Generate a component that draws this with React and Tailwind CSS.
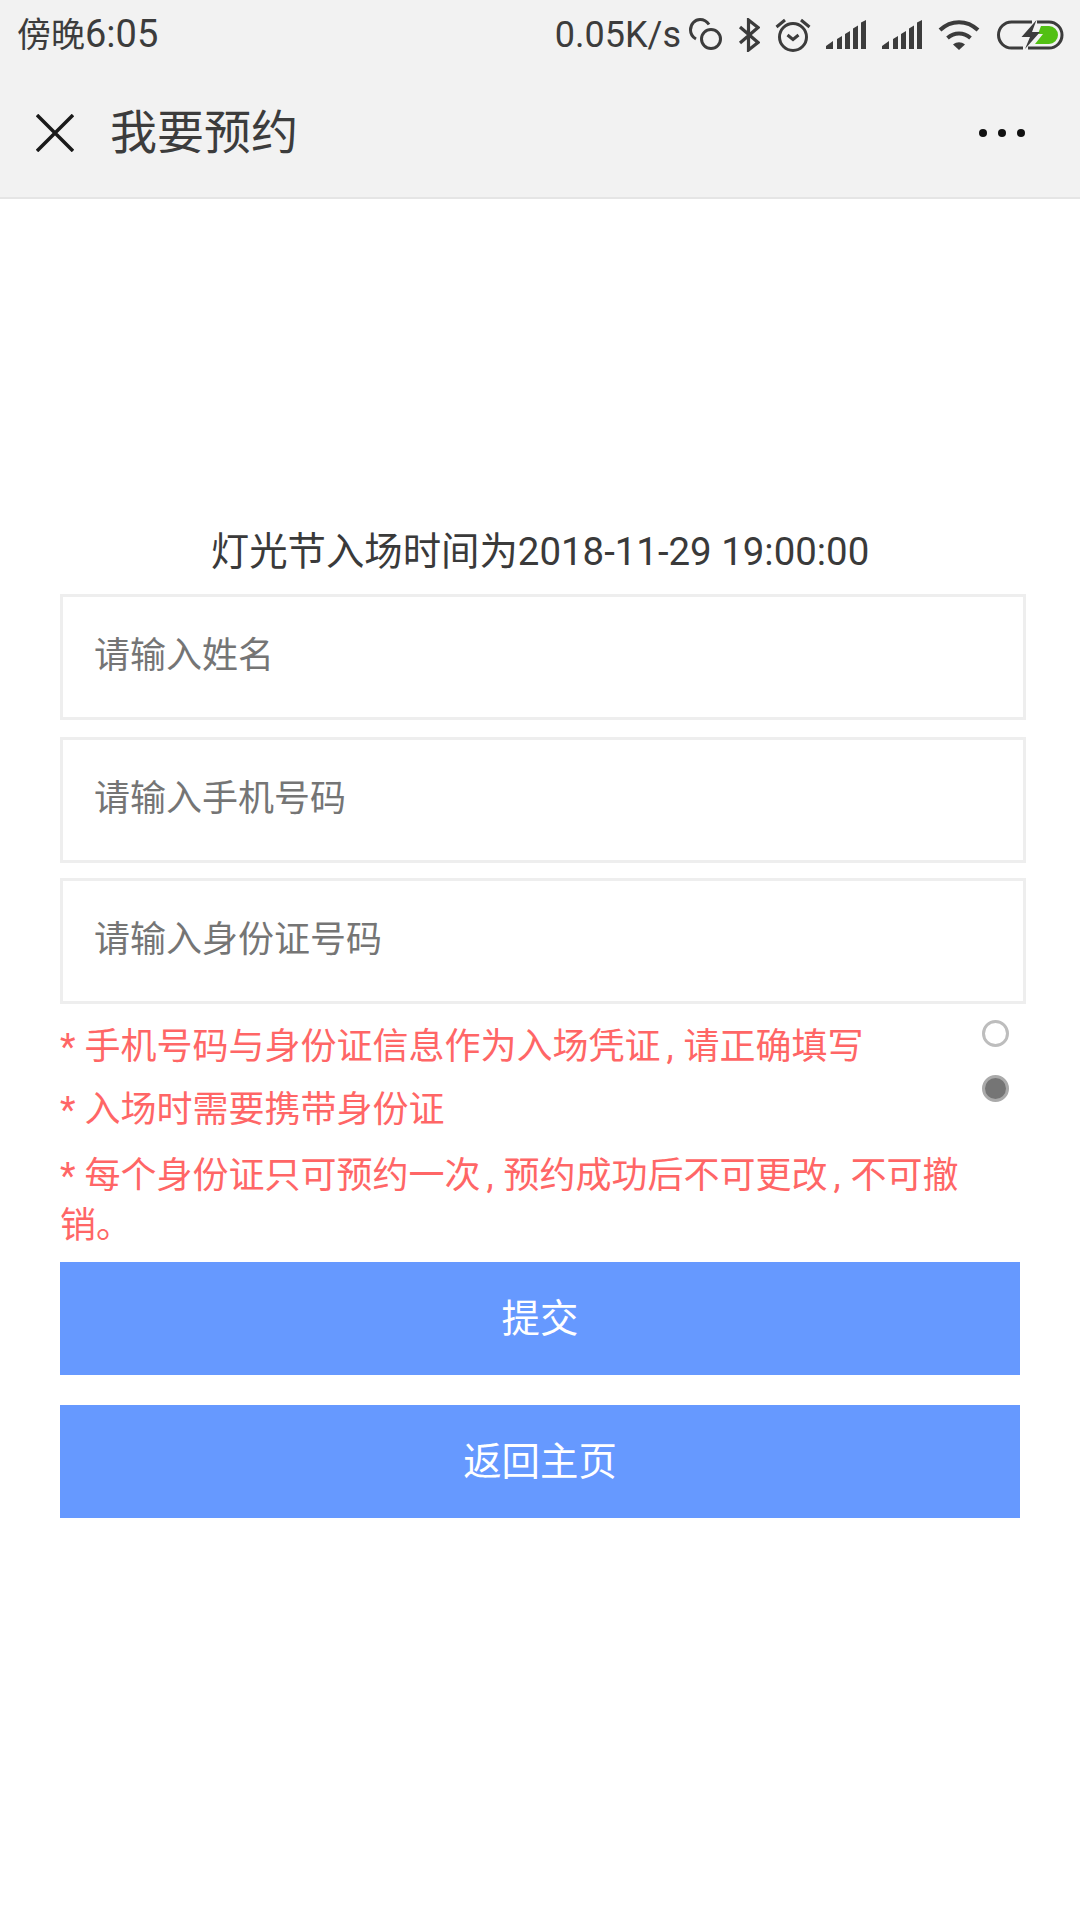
const CJK = "font-['Roboto','Noto_Sans_CJK_SC',sans-serif]";

function Comma() {
  return <span className="inline-block w-[23px] pl-[6px]">,</span>;
}

function Signal() {
  return (
    <svg width="40" height="29" viewBox="0 0 40 29" fill="#3c3c3c">
      <path d="M0 29v-3l7-5v8zM11 29V19l5-3v13zM19 29V14l5-3v18zM27 29V8.500l5-3V29zM35 29V2.500L40 0v29z" />
    </svg>
  );
}

function StatusIcons() {
  const c = "#3c3c3c";
  return (
    <div className="flex items-center">
      <svg width="33" height="33" viewBox="0 0 33 33" fill="none" stroke={c} strokeWidth="3" className="ml-[8px]">
        <circle cx="22" cy="21" r="9.500" />
        <path d="M7 21C3.500 19 1.500 15.500 1.500 12 1.500 6 6 1.500 11 1.500c4 0 7 2 9 5" />
      </svg>
      <svg width="22" height="34" viewBox="0 0 22 34" fill="none" stroke={c} strokeWidth="3.200" className="ml-[16px]">
        <path d="M2 9l18 15.500L10.500 32V2L20 9.500 2 25" />
      </svg>
      <svg width="36" height="34" viewBox="0 0 36 34" fill="none" stroke={c} strokeWidth="3" className="ml-[15px]">
        <circle cx="18" cy="19" r="13.500" />
        <path d="M12.500 17l5.500 4.500 5.500-4.500" />
        <path d="M1.500 9l8.500-7M34.500 9L26 2" />
      </svg>
      <div className="ml-[15px] flex items-center gap-[16px]">
        <Signal />
        <Signal />
      </div>
      <svg width="42" height="30" viewBox="0 0 42 30" fill="none" stroke={c} strokeWidth="4" className="ml-[16px]">
        <path d="M2 10c11-10.500 27-10.500 38 0M9.500 18c7-6 16-6 23 0" />
        <path d="M15 24.500c4-3 8-3 12 0l-6 5.500z" fill={c} stroke="none" />
      </svg>
      <svg width="68" height="30" viewBox="0 0 68 30" className="ml-[16px]">
        <path d="M36 2H15.500a13 13 0 0 0 0 26H27M32 28h21a13 13 0 0 0 0-26H41" fill="none" stroke={c} strokeWidth="3" />
        <path d="M45 6h8a9 9 0 0 1 0 18H39l8-10h-5z" fill="#52c014" />
        <path d="M40.500 0L25.500 17h8.500L29 29 44 12h-8z" fill={c} />
      </svg>
    </div>
  );
}

function Field({ label }) {
  return (
    <div className="flex h-[126px] w-[966px] items-center border-[3px] border-[#eeeeee] bg-white pb-[3px] pl-[31px] text-[36px] text-[#757575]">
      {label}
    </div>
  );
}

function Btn({ label }) {
  return (
    <div className="flex h-[113px] w-[960px] items-center justify-center bg-[#6699ff] text-[38.4px] text-white">
      {label}
    </div>
  );
}

export default function App() {
  return (
    <div className={`relative h-[1920px] w-[1080px] overflow-hidden bg-white ${CJK}`}>
      <header className="h-[199px] border-b-2 border-[#e5e5e5] bg-[#f2f2f2]">
        <div className="flex h-[69px] items-center justify-between pl-[17px] pr-[16px]">
          <span className="text-[34px] text-[#3c3c3c]">
            傍晚<span className="text-[38px]">6:05</span>
          </span>
          <div className="flex items-center">
            <span className="text-[36px] text-[#3c3c3c]">0.05K/s</span>
            <StatusIcons />
          </div>
        </div>
        <div className="flex h-[128px] items-center pl-[36px] pr-[55px]">
          <svg width="38" height="38" viewBox="0 0 38 38" stroke="#1a1a1a" strokeWidth="3.500" fill="none">
            <path d="M1 1l36 36M37 1L1 37" />
          </svg>
          <span className="ml-[36px] text-[47px] text-[#3c3c3c]">我要预约</span>
          <div className="ml-auto flex gap-[11px]">
            <span className="h-[8px] w-[8px] rounded-full bg-[#111111]" />
            <span className="h-[8px] w-[8px] rounded-full bg-[#111111]" />
            <span className="h-[8px] w-[8px] rounded-full bg-[#111111]" />
          </div>
        </div>
      </header>

      <main className="px-[60px]">
        <p className="mt-[329px] h-[66px] w-[960px] text-center text-[38.4px] leading-[48px] text-[#3a3a3a]">
          灯光节入场时间为2018-11-29 19:00:00
        </p>
        <div className="flex flex-col">
          <Field label="请输入姓名" />
          <div className="mt-[17px]">
            <Field label="请输入手机号码" />
          </div>
          <div className="mt-[15px]">
            <Field label="请输入身份证号码" />
          </div>
        </div>
        <div className="mt-[18px] w-[920px] text-[36px] leading-[50px] text-[#ff6666]">
          <p className="h-[63px]">* 手机号码与身份证信息作为入场凭证<Comma />请正确填写</p>
          <p className="h-[66px]">* 入场时需要携带身份证</p>
          <p className="-mb-[1px]">
            * 每个身份证只可预约一次<Comma />预约成功后不可更改<Comma />不可撤
            <br />
            销。
          </p>
        </div>
        <div className="mt-[12px] flex flex-col gap-[30px]">
          <Btn label="提交" />
          <Btn label="返回主页" />
        </div>
      </main>

      <span className="absolute left-[982px] top-[1020px] h-[27px] w-[27px] rounded-full border-[3px] border-[#bdbdbd] bg-white" />
      <span className="absolute left-[982px] top-[1075px] h-[27px] w-[27px] rounded-full border-[3px] border-[#aaaaaa] bg-[#757575]" />
    </div>
  );
}
